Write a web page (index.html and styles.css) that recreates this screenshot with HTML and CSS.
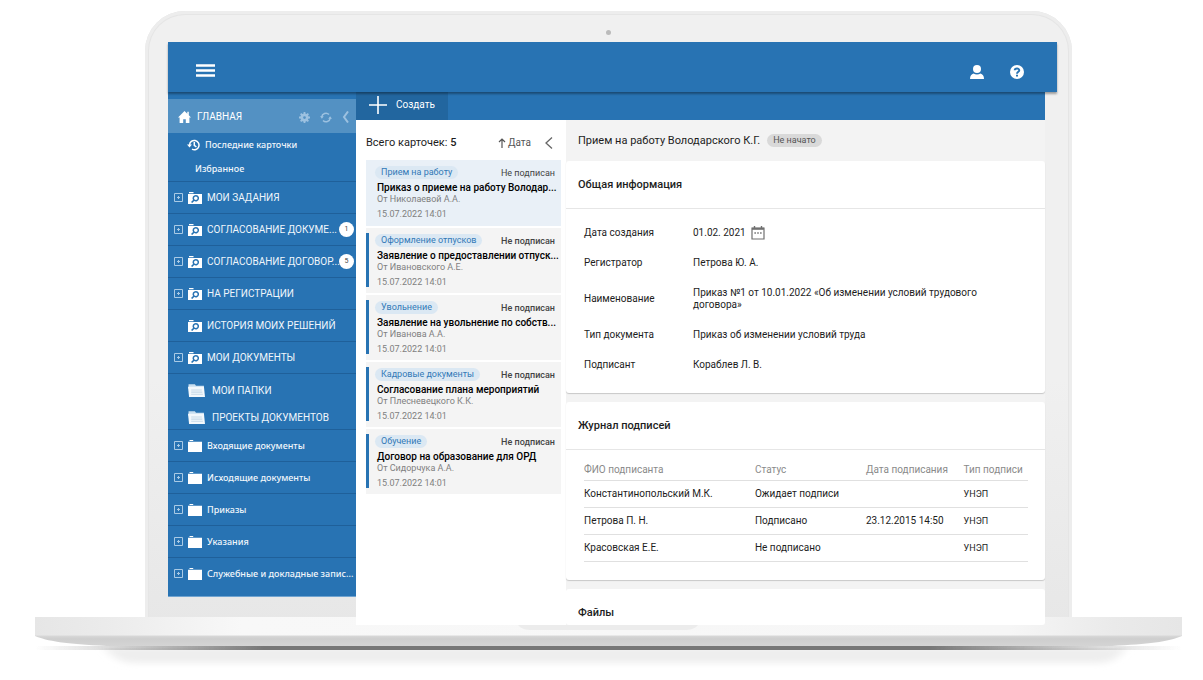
FILE: index.html
```html
<!DOCTYPE html>
<html lang="ru">
<head>
<meta charset="utf-8">
<title>Карточки документов</title>
<link rel="stylesheet" href="styles.css">
</head>
<body>
<svg class="sprite" aria-hidden="true">
  <symbol id="search-folder" viewBox="0 0 14 12"><path fill="currentColor" fill-rule="evenodd" d="M1 0h4.500v1.200H1zM0 2h14v10H0zM7.800 2.900a3.300 3.300 0 0 0-2.800 5L3 9.900l1.200 1.200 2-2a3.300 3.300 0 1 0 1.600-6.200zm0 1.500a1.800 1.800 0 1 1 0 3.600 1.800 1.800 0 0 1 0-3.600z"/></symbol>
  <symbol id="folder" viewBox="0 0 14 12"><path fill="currentColor" d="M1.500 0h3.700v1H1.500zM0 1.800h14V12H0z"/></symbol>
  <symbol id="folder-stack" viewBox="0 0 16 12"><path fill="#c9dff0" d="M.5 0h6l1 1.500H15v3H.5z"/><path fill="#f3f8fc" d="M0 2.500h15L16 12H1z"/><path stroke="#c7d9e8" d="M3 5.500h10M3 7.500h10.500M3 9.500h11"/></symbol>
  <symbol id="plus-box" viewBox="0 0 9 9"><path fill="none" stroke="currentColor" d="M.5.5h8v8h-8zM3 4.500h3M4.500 3v3"/></symbol>
</svg>
<div class="laptop">
  <div class="lid">
    <span class="camera"></span>
    <div class="app">
      <header class="topbar">
        <button class="icon-button" aria-label="Меню"><svg width="19" height="13" viewBox="0 0 19 13"><path stroke="#fff" stroke-width="2.600" d="M0 1.500h19M0 6.500h19M0 11.500h19"/></svg></button>
        <div class="topbar-actions">
          <button class="icon-button" aria-label="Профиль"><svg width="14" height="14" viewBox="0 0 14 14"><circle cx="7" cy="4" r="4" fill="#fff"/><path fill="#fff" d="M0 14c0-3.500 1.500-5 3.500-5.600 2 1.300 5 1.300 7 0C12.500 9 14 10.500 14 14z"/></svg></button>
          <button class="icon-button" aria-label="Справка"><svg width="14" height="14" viewBox="0 0 14 14"><circle cx="7" cy="7" r="7" fill="#fff"/><path fill="none" stroke="#2873b3" stroke-width="1.900" d="M4.700 5.300C4.800 3 9.300 2.900 9.300 5.200 9.300 6.800 7 6.700 7 8.800"/><path fill="#2873b3" d="M6 9.700h2v1.900H6z"/></svg></button>
        </div>
      </header>
      <div class="workspace">
        <nav class="sidebar">
          <div class="side-head">
            <svg width="13" height="12" viewBox="0 0 13 12"><path fill="#fff" d="M6.500 0 0 6.500h1.600V12h3.600V8.200h2.600V12h3.600V6.500H13L10.800 4.300V.8H9.300v2z"/></svg>
            <a class="side-title" href="#">ГЛАВНАЯ</a>
            <div class="side-tools">
              <button class="icon-button" aria-label="Настройки"><svg width="11" height="11" viewBox="0 0 12 12"><circle cx="6" cy="6" r="3" fill="none" stroke="currentColor" stroke-width="3"/><path stroke="currentColor" stroke-width="2" d="M6 0v3M6 9v3M0 6h3M9 6h3M1.800 1.800l2 2M8.200 8.200l2 2M10.200 1.800l-2 2M3.800 8.200l-2 2"/></svg></button>
              <button class="icon-button" aria-label="Обновить"><svg width="12" height="11" viewBox="0 0 12 11"><path fill="none" stroke="currentColor" stroke-width="1.500" d="M1.700 5A4.300 4.300 0 0 1 9 2.500M10.300 6A4.300 4.300 0 0 1 3 8.500"/><path fill="currentColor" d="M0 4.200h3.800L1.900 6.700zM8.200 6.800H12L10.100 4.300z"/></svg></button>
              <button class="icon-button" aria-label="Свернуть"><svg width="7" height="12" viewBox="0 0 7 12"><path fill="none" stroke="currentColor" stroke-width="2" d="M6 .5 2 6l4 5.500"/></svg></button>
            </div>
          </div>
          <ul class="side-group quick">
            <li class="recent"><svg width="13" height="12" viewBox="0 0 13 12"><path fill="none" stroke="#fff" stroke-width="1.500" d="M2.600 6A4.700 4.700 0 1 1 5 10.200M7.300 3v3.300L9.400 8"/><path fill="#fff" d="M0 5.500h5L2.500 8.500z"/></svg><a href="#">Последние карточки</a></li>
            <li class="favourite"><a href="#">Избранное</a></li>
          </ul>
          <ul class="side-list">
            <li><button class="expand" aria-label="Развернуть"><svg><use href="#plus-box"/></svg></button><svg class="folder"><use href="#search-folder"/></svg><a href="#">МОИ ЗАДАНИЯ</a></li>
            <li><button class="expand" aria-label="Развернуть"><svg><use href="#plus-box"/></svg></button><svg class="folder"><use href="#search-folder"/></svg><a href="#">СОГЛАСОВАНИЕ ДОКУМЕ...</a><span class="badge">1</span></li>
            <li><button class="expand" aria-label="Развернуть"><svg><use href="#plus-box"/></svg></button><svg class="folder"><use href="#search-folder"/></svg><a href="#">СОГЛАСОВАНИЕ ДОГОВОР...</a><span class="badge">5</span></li>
            <li><button class="expand" aria-label="Развернуть"><svg><use href="#plus-box"/></svg></button><svg class="folder"><use href="#search-folder"/></svg><a href="#">НА РЕГИСТРАЦИИ</a></li>
            <li><span class="expand"></span><svg class="folder"><use href="#search-folder"/></svg><a href="#">ИСТОРИЯ МОИХ РЕШЕНИЙ</a></li>
            <li><button class="expand" aria-label="Развернуть"><svg><use href="#plus-box"/></svg></button><svg class="folder"><use href="#search-folder"/></svg><a href="#">МОИ ДОКУМЕНТЫ</a></li>
          </ul>
          <ul class="side-group own">
            <li><svg width="17" height="13"><use href="#folder-stack"/></svg><a href="#">МОИ ПАПКИ</a></li>
            <li><svg width="17" height="13"><use href="#folder-stack"/></svg><a href="#">ПРОЕКТЫ ДОКУМЕНТОВ</a></li>
          </ul>
          <ul class="side-list lower">
            <li><button class="expand" aria-label="Развернуть"><svg><use href="#plus-box"/></svg></button><svg class="folder"><use href="#folder"/></svg><a href="#">Входящие документы</a></li>
            <li><button class="expand" aria-label="Развернуть"><svg><use href="#plus-box"/></svg></button><svg class="folder"><use href="#folder"/></svg><a href="#">Исходящие документы</a></li>
            <li><button class="expand" aria-label="Развернуть"><svg><use href="#plus-box"/></svg></button><svg class="folder"><use href="#folder"/></svg><a href="#">Приказы</a></li>
            <li><button class="expand" aria-label="Развернуть"><svg><use href="#plus-box"/></svg></button><svg class="folder"><use href="#folder"/></svg><a href="#">Указания</a></li>
            <li><button class="expand" aria-label="Развернуть"><svg><use href="#plus-box"/></svg></button><svg class="folder"><use href="#folder"/></svg><a href="#">Служебные и докладные запис...</a></li>
          </ul>
        </nav>
        <main class="main">
          <div class="toolbar">
            <button class="create"><svg width="18" height="18" viewBox="0 0 18 18"><path stroke="#fff" stroke-width="1.600" d="M0 9h18M9 0v18"/></svg>Создать</button>
          </div>
          <div class="columns">
            <section class="list">
              <div class="list-head">
                <span class="total">Всего карточек: <b>5</b></span>
                <button class="sort"><svg width="8" height="10" viewBox="0 0 8 10"><path fill="none" stroke="currentColor" stroke-width="1.200" d="M4 10V1M1 4l3-3 3 3"/></svg>Дата</button>
                <button class="collapse" aria-label="Свернуть список"><svg width="8" height="12" viewBox="0 0 8 12"><path fill="none" stroke="currentColor" stroke-width="1.300" d="M7 .5 1 6l6 5.500"/></svg></button>
              </div>
              <div class="cards">
                <article class="card active"><div class="card-top"><span class="tag">Прием на работу</span><span class="status">Не подписан</span></div><h3>Приказ о приеме на работу Володар...</h3><p class="from">От Николаевой А.А.</p><p class="date">15.07.2022 14:01</p></article>
                <article class="card"><div class="card-top"><span class="tag">Оформление отпусков</span><span class="status">Не подписан</span></div><h3>Заявление о предоставлении отпуск...</h3><p class="from">От Ивановского А.Е.</p><p class="date">15.07.2022 14:01</p></article>
                <article class="card"><div class="card-top"><span class="tag">Увольнение</span><span class="status">Не подписан</span></div><h3>Заявление на увольнение по собств...</h3><p class="from">От Иванова А.А.</p><p class="date">15.07.2022 14:01</p></article>
                <article class="card"><div class="card-top"><span class="tag">Кадровые документы</span><span class="status">Не подписан</span></div><h3>Согласование плана мероприятий</h3><p class="from">От Плесневецкого К.К.</p><p class="date">15.07.2022 14:01</p></article>
                <article class="card"><div class="card-top"><span class="tag">Обучение</span><span class="status">Не подписан</span></div><h3>Договор на образование для ОРД</h3><p class="from">От Сидорчука А.А.</p><p class="date">15.07.2022 14:01</p></article>
              </div>
            </section>
            <section class="detail">
              <div class="detail-head"><h1>Прием на работу Володарского К.Г.</h1><span class="chip">Не начато</span></div>
              <section class="panel">
                <h2>Общая информация</h2>
                <dl class="fields">
                  <dt>Дата создания</dt><dd>01.02. 2021 <button class="icon-button calendar" aria-label="Выбрать дату"><svg width="14" height="14" viewBox="0 0 14 14"><path fill="none" stroke="currentColor" stroke-width="1.200" d="M1 2h12v11H1z"/><path stroke="currentColor" stroke-width="2" d="M1 2.800h12"/><path stroke="currentColor" stroke-width="1.400" d="M3.500 0v3M10.500 0v3M3.400 7h1.500M6.250 7h1.500M9.100 7h1.500"/></svg></button></dd>
                  <dt>Регистратор</dt><dd>Петрова Ю. А.</dd>
                  <dt>Наименование</dt><dd>Приказ №1 от 10.01.2022 «Об изменении условий трудового договора»</dd>
                  <dt>Тип документа</dt><dd>Приказ об изменении условий труда</dd>
                  <dt>Подписант</dt><dd>Кораблев Л. В.</dd>
                </dl>
              </section>
              <section class="panel">
                <h2>Журнал подписей</h2>
                <div class="table-wrap">
                  <table>
                    <thead><tr><th class="c-name">ФИО подписанта</th><th class="c-status">Статус</th><th class="c-date">Дата подписания</th><th>Тип подписи</th></tr></thead>
                    <tbody>
                      <tr><td>Константинопольский М.К.</td><td>Ожидает подписи</td><td></td><td class="kind">УНЭП</td></tr>
                      <tr><td>Петрова П. Н.</td><td>Подписано</td><td>23.12.2015 14:50</td><td class="kind">УНЭП</td></tr>
                      <tr><td>Красовская Е.Е.</td><td>Не подписано</td><td></td><td class="kind">УНЭП</td></tr>
                    </tbody>
                  </table>
                </div>
              </section>
              <section class="panel files"><h2>Файлы</h2></section>
            </section>
          </div>
        </main>
      </div>
    </div>
  </div>
  <svg class="base" viewBox="0 0 1147 62" preserveAspectRatio="none" aria-hidden="true">
    <defs>
      <linearGradient id="deck"><stop offset="0" stop-color="#e6e6e6"/><stop offset=".06" stop-color="#ebebeb"/><stop offset=".18" stop-color="#f8f8f8"/><stop offset=".85" stop-color="#f6f6f6"/><stop offset=".94" stop-color="#eaeaea"/><stop offset="1" stop-color="#e6e6e6"/></linearGradient>
      <linearGradient id="edge" x2="0" y2="1"><stop offset="0" stop-color="#dadada"/><stop offset=".35" stop-color="#cecece"/><stop offset="1" stop-color="#d4d4d4"/></linearGradient>
      <linearGradient id="contact"><stop offset="0" stop-color="#777" stop-opacity="0"/><stop offset=".06" stop-color="#777" stop-opacity=".25"/><stop offset=".2" stop-color="#777"/><stop offset=".78" stop-color="#777"/><stop offset=".93" stop-color="#777" stop-opacity=".25"/><stop offset="1" stop-color="#777" stop-opacity="0"/></linearGradient>
      <filter id="soft" x="-5%" y="-60%" width="110%" height="220%"><feGaussianBlur stdDeviation="5 3"/></filter>
      <filter id="thin" filterUnits="userSpaceOnUse" x="0" y="24" width="1147" height="16"><feGaussianBlur stdDeviation="0 .7"/></filter>
    </defs>
    <path fill="#eeeeee" filter="url(#soft)" d="M68 30h1024c-8 10-14 16-30 16H102c-18 0-24-6-34-16z"/>
    <path fill="#fff" d="M0 19h1147c-10 6-30 10-70 12H72C30 29 12 25 0 19z"/>
    <path fill="url(#contact)" filter="url(#thin)" d="M0 29h1147v4H0z"/>
    <path fill="url(#edge)" d="M0 18h1147v1c-14 6-34 8-70 10H72C30 27 12 24 0 19z"/>
    <path fill="url(#deck)" d="M0 0h1147v18.500H0z"/>
    <path fill="#ececec" d="M483 8h180c-3 4-8 5-14 5H497c-6 0-11-1-14-5z"/>
  </svg>
</div>
</body>
</html>
```
FILE: styles.css
```css
* { box-sizing: border-box; }
body { margin: 0; background: #fff; color: #1d1d1d; font: 10px/12px Roboto, sans-serif; }
h1, h2, h3, p, dl, dd, ul { margin: 0; padding: 0; }
ul { list-style: none; }
a { color: inherit; text-decoration: none; }
button { border: 0; padding: 0; background: none; color: inherit; font: inherit; cursor: pointer; }
svg { display: block; flex: none; }
.sprite { position: absolute; width: 0; height: 0; }

.laptop { padding-top: 11px; }
.lid {
  position: relative;
  margin: 0 131px 0 145px;
  padding: 31px 15px 0 23px;
  border-radius: 40px 40px 0 0;
  background: linear-gradient(#f0f0f0 60%, #e7e7e7);
  box-shadow: inset 0 0 0 3px #ededed, inset 0 0 0 4px #e5e5e5;
}
.camera { position: absolute; top: 19px; left: 50%; width: 5px; height: 5px; margin-left: -3px; border-radius: 50%; background: #bbb; }
.base { position: relative; width: calc(100% - 56px); height: 62px; margin: -8px 21px 0 35px; }

.app { position: relative; z-index: 1; }
.icon-button { display: flex; align-items: center; justify-content: center; }
.topbar {
  position: relative; z-index: 2;
  display: flex; align-items: center; justify-content: space-between;
  height: 50px; padding: 6px 33px 0 28px;
  background: #2873b3; box-shadow: 0 2px 2px rgba(0, 0, 0, .35);
}
.topbar-actions { display: flex; gap: 26px; padding-top: 3px; }

.workspace { display: flex; align-items: flex-start; margin-right: 12px; }
.sidebar {
  flex: none; width: 188px; padding: 7px 0;
  background: #2873b3; color: #f0f6fb;
  line-height: 14px;
  border-bottom: 1px solid #6fa3d0;
}
.side-head { display: flex; align-items: center; height: 34px; padding: 2px 7px 0 10px; background: #5391c3; color: #fff; }
.side-title { margin-left: 6px; }
.side-tools { display: flex; gap: 10px; margin-left: auto; color: #9cc1e0; }
.side-group li { display: flex; align-items: center; }
.quick, .lower { font-family: "Noto Sans", sans-serif; font-size: 9px; font-weight: 500; }
.side-group.quick { height: 48px; }
.side-group.quick li { height: 24px; }
.recent { gap: 5px; padding-left: 19px; }
.favourite { padding-left: 27px; }
.side-group.own { height: 56px; padding-top: 3px; border-top: 1px solid #1f609a; }
.side-group.own li { gap: 7px; height: 27px; padding-left: 20px; }
.side-list li {
  position: relative;
  display: flex; align-items: center;
  height: 32px; padding-left: 6px;
  border-top: 1px solid #1f609a; white-space: nowrap;
}
.expand { flex: none; width: 9px; height: 9px; margin-right: 5px; color: #a9cae5; }
.expand svg { width: 9px; height: 9px; }
.folder { width: 14px; height: 12px; margin-right: 5px; color: #fff; }
.badge {
  position: absolute; right: 2px; top: 8px;
  width: 15px; height: 15px; border-radius: 50%;
  background: #fff; color: #444; font-size: 7px; line-height: 15px; text-align: center;
}

.main { flex: 1; min-width: 0; background: #fff; }
.toolbar { height: 28px; background: #2873b3; }
.create { display: flex; align-items: center; gap: 9px; height: 28px; padding: 0 13px 2px; background: #22669f; color: #fff; }
.columns { display: flex; padding-left: 10px; gap: 5px; }
.list { flex: none; width: 195px; }
.list-head { display: flex; align-items: center; height: 40px; padding: 6px 8px 0 0; font-size: 11px; }
.total { margin-right: auto; }
.total b { font-weight: 500; }
.sort { display: flex; align-items: center; gap: 2px; margin-right: 14px; color: #555; font-size: 10px; }
.collapse { color: #666; }
.cards { display: flex; flex-direction: column; gap: 2px; }
.card { position: relative; height: 65px; padding: 6px 6px 0 11px; background: #f4f4f4; white-space: nowrap; }
.card::before { content: ""; position: absolute; left: 0; top: 5px; bottom: 6px; width: 3px; background: #2873b3; }
.card.active { height: 66px; background: #e9f0f7; }
.card.active::before { display: none; }
.card-top { display: flex; align-items: center; justify-content: space-between; }
.tag { margin-left: -2px; padding: 0 6px; border-radius: 7px; background: #dbe8f3; color: #3279b7; font-size: 9px; line-height: 13px; }
.status { color: #444; font-size: 9px; font-weight: 500; }
.card.active .status { font-weight: 400; }
.card h3 { margin-top: 3px; font-size: 10px; line-height: 12px; font-weight: 500; color: #000; }
.card p { color: #808080; font-size: 9px; line-height: 11px; }
.card .date { margin-top: 4px; }

.detail { flex: 1; min-width: 0; background: #f3f3f3; }
.detail-head { display: flex; align-items: center; gap: 7px; height: 41px; padding-left: 12px; }
.detail-head h1 { font-size: 11px; font-weight: 400; }
.chip { padding: 0 6px; border-radius: 7px; background: #d9d9d9; color: #555; font-size: 9px; line-height: 13px; }
.panel { margin-bottom: 9px; background: #fff; border-radius: 3px; box-shadow: 0 1px 1px #c8c8c8; }
.panel h2 { height: 47px; padding-left: 12px; font-size: 11px; line-height: 47px; font-weight: 500; }
.fields { display: grid; grid-template-columns: 109px 1fr; row-gap: 18px; align-items: center; padding: 18px 17px 22px 18px; border-top: 1px solid #e6e6e6; }
.fields dd { display: flex; align-items: center; gap: 5px; }
.calendar { height: 12px; color: #707070; }
.table-wrap { padding: 10px 17px 18px 18px; border-top: 1px solid #e6e6e6; }
table { width: 100%; border-collapse: collapse; table-layout: fixed; }
th, td { padding: 0; border-bottom: 1px solid #e0e0e0; text-align: left; white-space: nowrap; font-weight: 400; }
th { height: 20px; color: #8a8a8a; }
td { height: 27px; }
.kind { font-size: 9px; }
.c-name { width: 38.5%; }
.c-status { width: 25%; }
.c-date { width: 22%; }
.panel.files { height: 36px; margin: 0; box-shadow: none; }
```
